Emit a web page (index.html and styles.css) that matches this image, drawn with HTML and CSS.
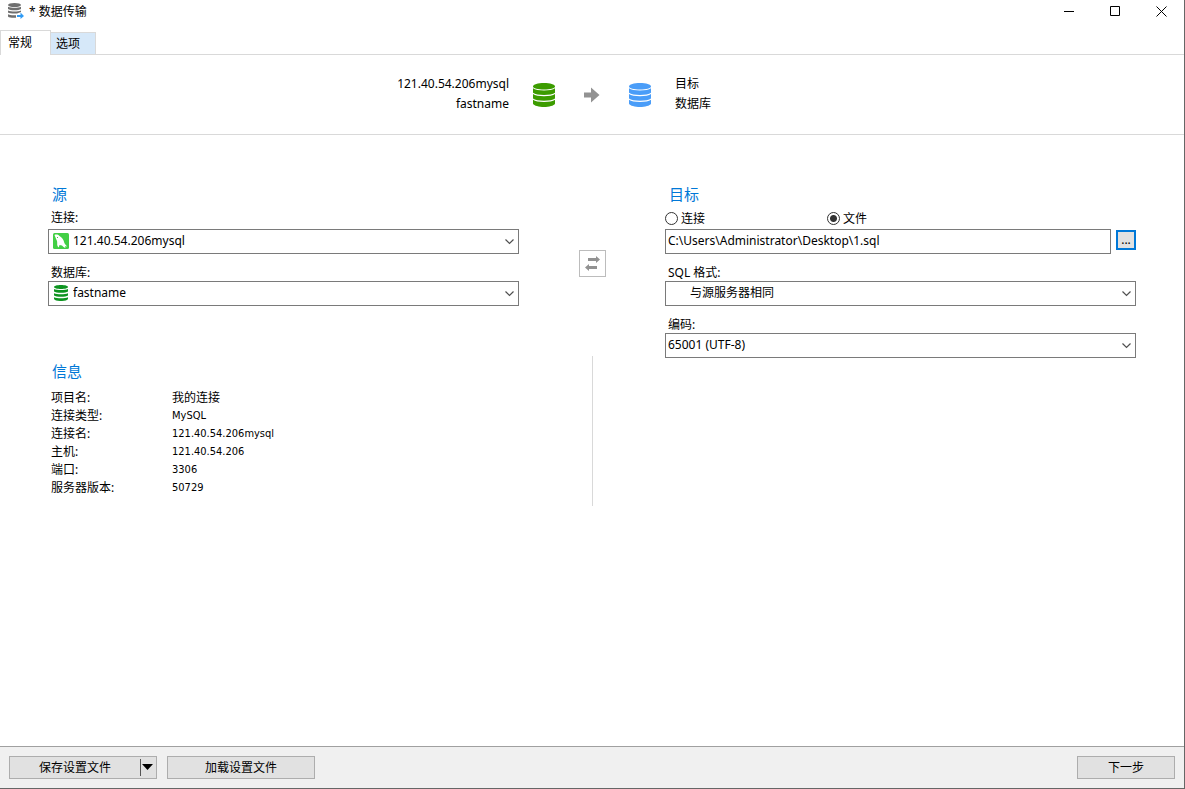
FILE: index.html
```html
<!DOCTYPE html>
<html lang="zh-CN">
<head>
<meta charset="utf-8">
<title>数据传输</title>
<link rel="stylesheet" href="styles.css">
</head>
<body>
<svg class="defs" aria-hidden="true">
  <symbol id="database" viewBox="0 0 22 24">
    <path d="M0 3.400C0 1.500 5 0 11 0s11 1.500 11 3.400-5 3-11 3S0 5.300 0 3.400z"/>
    <path d="M0 5.200c2 1.600 6 2.200 11 2.200s9-.6 11-2.200v4.600c-2 1.500-6 2.200-11 2.200S2 11.300 0 9.800z"/>
    <path d="M0 11c2 1.600 6 2.200 11 2.200s9-.6 11-2.200v4.600c-2 1.500-6 2.200-11 2.200S2 17.100 0 15.600z"/>
    <path d="M0 16.800C2 18.400 6 19 11 19s9-.6 11-2.200v4c-1 2-6 3.200-11 3.200S1 22.800 0 20.800z"/>
  </symbol>
  <symbol id="database-small" viewBox="0 0 14 16">
    <path d="M0 2C0 .9 3 0 7 0s7 .9 7 2-3 2-7 2-7-.9-7-2z"/>
    <path d="M0 4c3 1.300 11 1.300 14 0v2.500C12 8.300 2 8.300 0 6.500z"/>
    <path d="M0 8.200c3 1.300 11 1.300 14 0v2.300c-2 1.800-12 1.800-14 0z"/>
    <path d="M0 12.200c3 1.300 11 1.300 14 0v1.800c-1 2.700-13 2.700-14 0z"/>
  </symbol>
  <symbol id="chevron" viewBox="0 0 9 6">
    <path d="M.5.5l4 4 4-4" fill="none" stroke="#505050" stroke-width="1.200"/>
  </symbol>
</svg>
<div class="window">
  <header class="titlebar">
    <svg class="app-icon" viewBox="0 0 16 16" aria-hidden="true">
      <g fill="#6f6f6f">
        <ellipse cx="6.500" cy="2" rx="6.500" ry="2"/>
        <path d="M0 3.800c3 1.300 10 1.300 13 0v2.200c-2 1.800-11 1.800-13 0z"/>
        <path d="M0 7.600c3 1.300 10 1.300 13 0v1.500l-4 1.300c-3 .3-8 0-9-1z"/>
        <path d="M0 11.200c2 1.100 5 1.300 8 1v2.500c-3 .3-7 0-8-1.300z"/>
      </g>
      <path d="M9 12h3.500v-2.500L16 13l-3.500 3v-2H9z" fill="#2f9bf5"/>
    </svg>
    <h1 class="title">* 数据传输</h1>
    <div class="window-controls">
      <button class="window-button" aria-label="最小化"><svg viewBox="0 0 11 11"><path d="M0 5.500h10"/></svg></button>
      <button class="window-button" aria-label="最大化"><svg viewBox="0 0 11 11"><path d="M.5.5h9v9h-9z"/></svg></button>
      <button class="window-button" aria-label="关闭"><svg viewBox="0 0 11 11"><path d="M.5.5l10 10M10.500.5l-10 10"/></svg></button>
    </div>
  </header>

  <nav class="tabs" role="tablist">
    <button class="tab tab-active" role="tab" aria-selected="true">常规</button>
    <button class="tab" role="tab" aria-selected="false">选项</button>
  </nav>

  <section class="summary">
    <div class="summary-text summary-source"><div>121.40.54.206mysql</div><div>fastname</div></div>
    <div class="summary-icons">
      <svg class="summary-db db-green" aria-hidden="true"><use href="#database"/></svg>
      <svg class="summary-arrow" viewBox="0 0 16 16" aria-hidden="true"><path d="M0 5.500h7V.5L15.500 8 7 15.500v-5H0z"/></svg>
      <svg class="summary-db db-blue" aria-hidden="true"><use href="#database"/></svg>
    </div>
    <div class="summary-text"><div>目标</div><div>数据库</div></div>
  </section>

  <main class="content">
    <div class="column">
      <section class="source">
        <h2 class="heading">源</h2>
        <div class="field">
          <label class="label" for="source-connection">连接:</label>
          <div class="combo">
            <select class="select with-icon" id="source-connection"><option>121.40.54.206mysql</option></select>
            <svg class="combo-icon" viewBox="0 0 16 16" aria-hidden="true">
              <rect width="16" height="16" rx="1.500" fill="#42cf45"/>
              <path d="M1.500 2c1.500-.8 3.500-.5 5 1 2.500 1.500 4.200 3.500 4.700 6.500.3 1.500 1.800 2.500 3 4l-2.200-.3.500 1.800c-1.500-.5-2.500-1.500-3.500-2.500L6.500 12l-.7 2.500C4.500 13.500 4 12 4.200 10 4.500 8 3.200 6.500 2.500 4.500z" fill="#fff"/>
              <path d="M4 4.500h1" stroke="#42cf45"/>
            </svg>
            <svg class="chevron" aria-hidden="true"><use href="#chevron"/></svg>
          </div>
        </div>
        <div class="field">
          <label class="label" for="source-database">数据库:</label>
          <div class="combo">
            <select class="select with-icon" id="source-database"><option>fastname</option></select>
            <svg class="combo-icon" aria-hidden="true"><use href="#database-small"/></svg>
            <svg class="chevron" aria-hidden="true"><use href="#chevron"/></svg>
          </div>
        </div>
      </section>
      <section class="info">
        <h2 class="heading">信息</h2>
        <dl class="info-list">
          <dt>项目名:</dt><dd>我的连接</dd>
          <dt>连接类型:</dt><dd>MySQL</dd>
          <dt>连接名:</dt><dd>121.40.54.206mysql</dd>
          <dt>主机:</dt><dd>121.40.54.206</dd>
          <dt>端口:</dt><dd>3306</dd>
          <dt>服务器版本:</dt><dd>50729</dd>
        </dl>
      </section>
    </div>

    <div class="middle">
      <button class="swap" aria-label="交换">
        <svg viewBox="0 0 15 15" aria-hidden="true"><path d="M3 2h8V0l4 3.500L11 7V5H3zM12 13H4v2l-4-3.500L4 8v2h8z"/></svg>
      </button>
      <div class="divider"></div>
    </div>

    <section class="column">
      <h2 class="heading">目标</h2>
      <div class="field">
        <div class="radios">
          <label class="radio"><input type="radio" name="target">连接</label>
          <label class="radio"><input type="radio" name="target" checked>文件</label>
        </div>
        <div class="file-row">
          <input class="textbox" type="text" aria-label="文件" value="C:\Users\Administrator\Desktop\1.sql">
          <button class="browse" aria-label="浏览">...</button>
        </div>
      </div>
      <div class="field">
        <label class="label" for="sql-format">SQL 格式:</label>
        <div class="combo">
          <select class="select with-icon" id="sql-format"><option>与源服务器相同</option></select>
          <svg class="chevron" aria-hidden="true"><use href="#chevron"/></svg>
        </div>
      </div>
      <div class="field">
        <label class="label" for="encoding">编码:</label>
        <div class="combo">
          <select class="select" id="encoding"><option>65001 (UTF-8)</option></select>
          <svg class="chevron" aria-hidden="true"><use href="#chevron"/></svg>
        </div>
      </div>
    </section>
  </main>

  <footer class="footer">
    <div class="split">
      <button class="button split-main">保存设置文件</button>
      <button class="button split-menu" aria-label="更多"><svg viewBox="0 0 11 6" aria-hidden="true"><path d="M0 0h11L5.500 6z"/></svg></button>
    </div>
    <button class="button load">加载设置文件</button>
    <button class="button next">下一步</button>
  </footer>
</div>
</body>
</html>
```
FILE: styles.css
```css
* {
  box-sizing: border-box;
}

body,
h1,
h2,
dl,
dd {
  margin: 0;
}

body,
button,
input,
select {
  font-family: "Noto Sans", "Noto Sans CJK SC", sans-serif;
  font-size: 12px;
  color: #000;
}

body {
  background: #fff;
  line-height: 20px;
}

svg {
  display: block;
  flex: none;
}

.defs {
  position: absolute;
  width: 0;
  height: 0;
}

.window {
  display: flex;
  flex-direction: column;
  min-height: 100vh;
  border-right: 1px solid #666;
  border-bottom: 1px solid #666;
}

.titlebar {
  display: flex;
  height: 30px;
  padding-left: 8px;
}

.app-icon {
  width: 16px;
  height: 16px;
  margin-top: 3px;
}

.title {
  flex: 1;
  margin: 2px 0 0 5px;
  font-size: 12px;
  font-weight: normal;
}

.window-controls {
  display: flex;
  height: 23px;
}

.window-button {
  display: flex;
  align-items: center;
  justify-content: center;
  width: 46px;
  padding: 0;
  border: 0;
  background: none;
}

.window-button svg {
  width: 11px;
  height: 11px;
  fill: none;
  stroke: #000;
}

.tabs {
  display: flex;
  align-items: flex-end;
  height: 25px;
  border-bottom: 1px solid #d9d9d9;
}

.tab {
  width: 45px;
  height: 22px;
  padding: 0 0 2px 5px;
  border: 1px solid #d9d9d9;
  border-left: 0;
  border-bottom: 0;
  background: #d6e8f9;
  text-align: left;
  white-space: nowrap;
}

.tab-active {
  width: 51px;
  height: 25px;
  margin-bottom: -1px;
  padding: 0 0 2px 7px;
  border-left: 1px solid #d9d9d9;
  background: #fff;
}

.summary {
  display: grid;
  grid-template-columns: 1fr auto 1fr;
  column-gap: 24px;
  align-items: center;
  height: 80px;
  border-bottom: 1px solid #d9d9d9;
}

.summary-text {
  padding-bottom: 2px;
}

.summary-source {
  text-align: right;
}

.summary-icons {
  display: flex;
  gap: 29px;
  align-items: center;
}

.summary-db {
  width: 22px;
  height: 24px;
}

.summary-arrow {
  width: 16px;
  height: 16px;
  fill: #929292;
}

.db-green {
  fill: #3c9c00;
}

.db-blue {
  fill: #4a9df8;
}

.content {
  flex: 1;
  display: grid;
  grid-template-columns: 1fr 146px 1fr;
  padding: 49px 48px 0;
}

.heading {
  padding-left: 4px;
  font-size: 15px;
  font-weight: normal;
  line-height: 20px;
  color: #0078d7;
}

.source {
  height: 177px;
}

.field {
  display: flex;
  flex-direction: column;
}

.heading + .field {
  padding-top: 4px;
}

.label {
  height: 21px;
  padding-left: 3px;
}

.field + .field .label {
  height: 27px;
  padding-top: 9px;
}

.combo {
  position: relative;
  display: flex;
  height: 25px;
}

.select,
.textbox {
  flex: 1;
  min-width: 0;
  height: 25px;
  margin: 0;
  padding: 0 24px 2px 2px;
  border: 1px solid #7a7a7a;
  border-radius: 0;
  background: #fff;
  appearance: none;
}

.with-icon {
  padding-left: 24px;
}

.combo-icon {
  position: absolute;
  left: 5px;
  top: 4px;
  width: 16px;
  height: 16px;
  fill: #0d9420;
}

.chevron {
  position: absolute;
  right: 5px;
  top: 10px;
  width: 9px;
  height: 6px;
}

.info-list {
  display: grid;
  grid-template-columns: 121px 1fr;
  grid-auto-rows: 18px;
  padding: 8px 0 0 3px;
  line-height: 18px;
}

.info-list dd {
  font-family: "DejaVu Sans Condensed", "Noto Sans CJK SC", sans-serif;
  font-size: 11px;
}

.info-list dd:first-of-type {
  font-size: 12px;
}

.middle {
  display: flex;
  flex-direction: column;
  align-items: center;
  padding-top: 66px;
}

.swap {
  display: flex;
  align-items: center;
  justify-content: center;
  width: 27px;
  height: 27px;
  padding: 0;
  border: 1px solid #bcbcbc;
  background: #fff;
}

.swap svg {
  width: 15px;
  height: 15px;
  fill: #929292;
}

.divider {
  width: 1px;
  height: 150px;
  margin-top: 79px;
  background: #d9d9d9;
}

.radios {
  display: grid;
  grid-template-columns: 162px auto;
  height: 21px;
}

.radio {
  display: flex;
  align-items: center;
  gap: 3px;
}

.radio input {
  width: 13px;
  height: 13px;
  margin: 0;
  border: 1px solid #333;
  border-radius: 50%;
  background: #fff;
  appearance: none;
}

.radio input:checked {
  background: radial-gradient(circle, #333 3px, #fff 4px);
}

.file-row {
  display: flex;
  gap: 5px;
}

.textbox {
  padding-right: 2px;
}

.browse {
  width: 20px;
  height: 20px;
  margin-top: 1px;
  padding: 0;
  border: 2px solid #0078d7;
  background: #e1e1e1;
  line-height: 14px;
}

.footer {
  display: flex;
  gap: 10px;
  height: 42px;
  padding: 9px 9px 0;
  border-top: 1px solid #a0a0a0;
  background: #f0f0f0;
}

.button {
  height: 23px;
  padding: 0 0 1px;
  border: 1px solid #adadad;
  border-radius: 0;
  background: #e1e1e1;
}

.split {
  display: flex;
  width: 148px;
  height: 23px;
  border: 1px solid #adadad;
  background: #e1e1e1;
}

.split-main {
  flex: 1;
  height: 21px;
  border: 0;
}

.split-menu {
  display: flex;
  align-items: center;
  justify-content: center;
  width: 16px;
  height: 17px;
  margin-top: 2px;
  padding-right: 2px;
  border: 0;
  border-left: 1px solid #555;
}

.split-menu svg {
  width: 11px;
  height: 6px;
}

.load {
  width: 148px;
}

.next {
  width: 98px;
  margin-left: auto;
}
```
